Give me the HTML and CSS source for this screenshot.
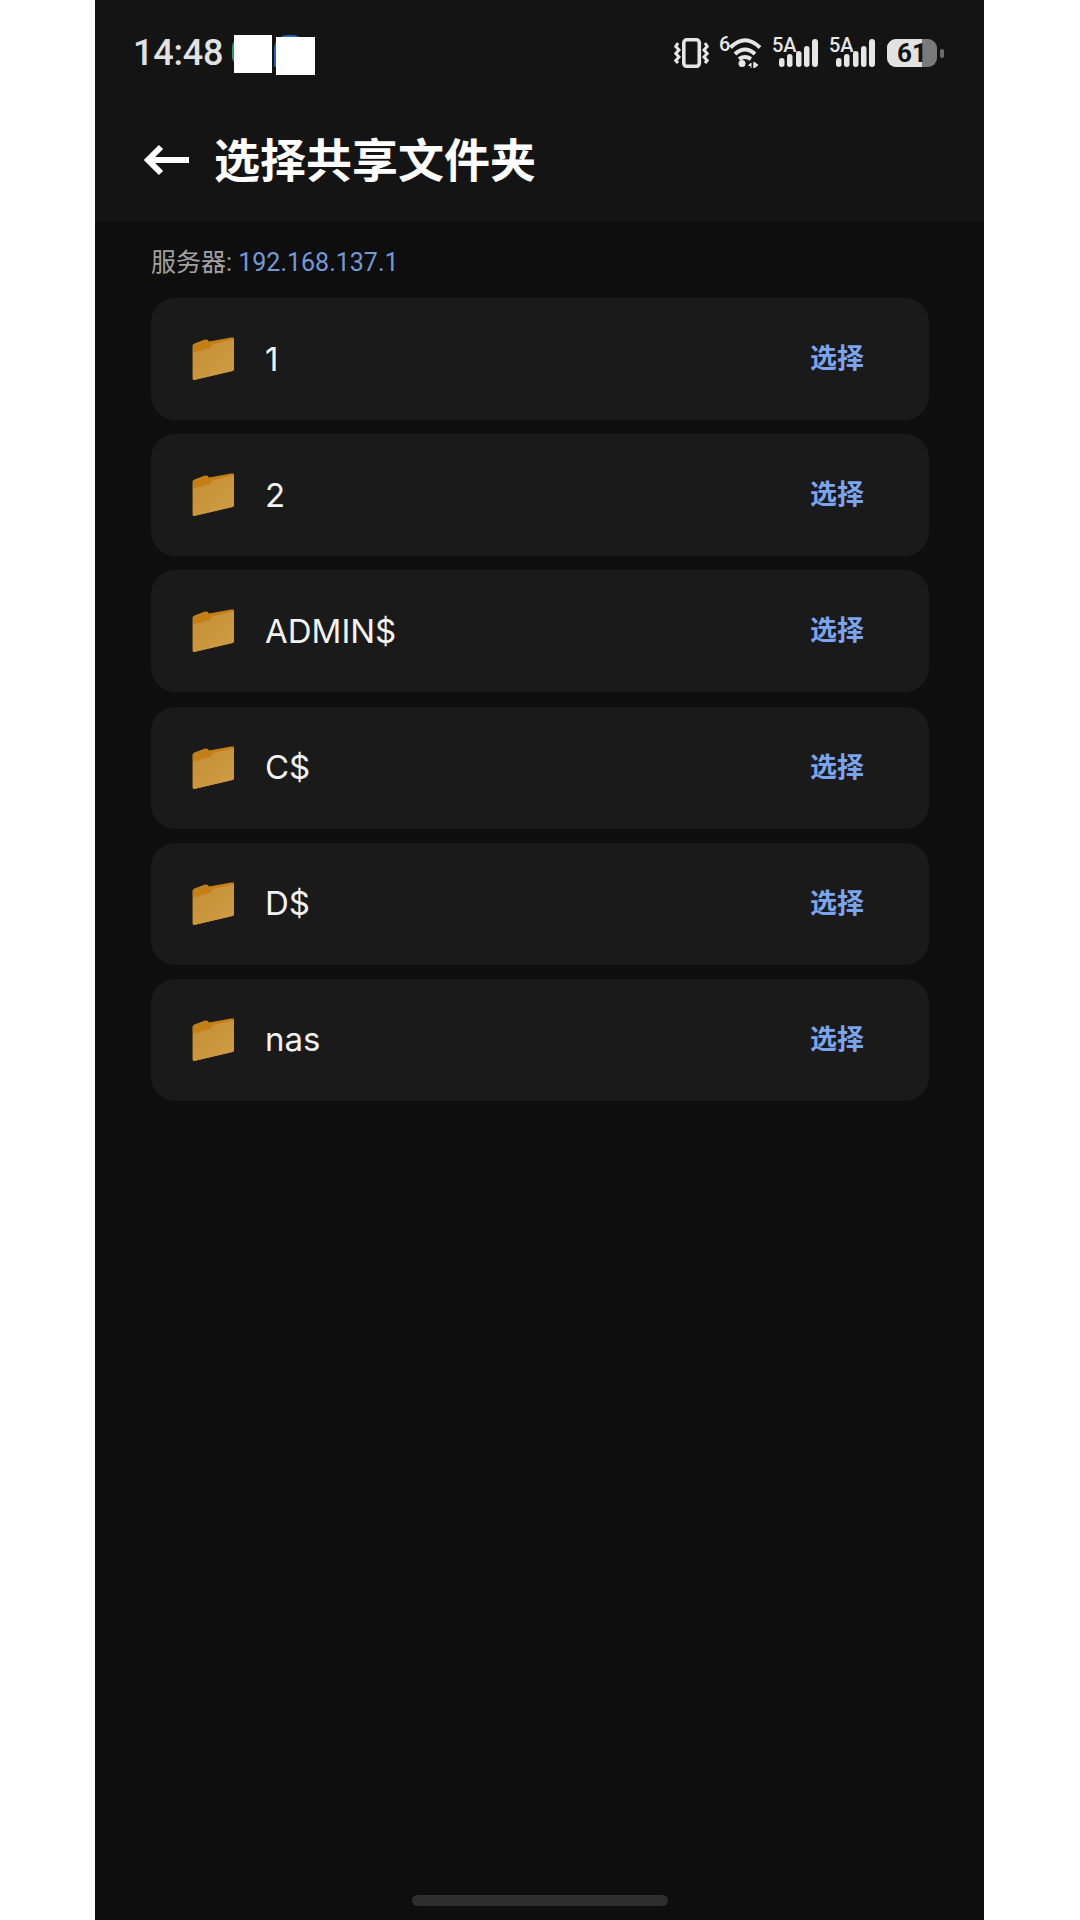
FILE: index.html
```html
<!DOCTYPE html>
<html lang="zh-CN">
<head>
    <meta charset="UTF-8">
    <meta name="viewport" content="width=device-width, initial-scale=1.0">
    <title>选择共享文件夹</title>
    <link rel="stylesheet" href="styles.css">
</head>
<body>
    <svg class="defs" width="0" height="0">
        <defs>
            <linearGradient id="folder-front" x1="0" y1="0" x2="1" y2="1">
                <stop offset="0" stop-color="#c48f35"/>
                <stop offset="1" stop-color="#cf9c46"/>
            </linearGradient>
        </defs>
        <symbol id="folder" viewBox="0 0 42 43">
            <path d="M0.500 9 Q0.500 7 2.500 6.500 L13 2.500 Q16 2 17 4.500 L40.500 0.300 Q42 0.300 42 2 L42 32 Q42 33.500 40.500 34 L2 43 Q0.500 43 0.500 41 Z" fill="#c57f17"/>
            <path d="M1 15.500 L18 11 Q20 7.500 22 7 L40.500 2.500 Q42 2.500 42 4 L42 32 Q42 33.500 40.500 34 L2 43 Q1 43 1 41 Z" fill="url(#folder-front)"/>
        </symbol>
    </svg>

    <div class="phone">
        <header class="top">
            <div class="status-bar">
                <div class="clock-group">
                    <span class="clock">14:48</span>
                    <span class="notif notif-green"></span>
                    <span class="notif notif-blue"></span>
                </div>
                <div class="status-icons">
                    <svg class="ic-vibrate" width="35" height="30" viewBox="0 0 35 30">
                        <rect x="9.800" y="1.800" width="15.500" height="26.500" rx="3" fill="none" stroke="#e6e6e6" stroke-width="3.600"/>
                        <path d="M4 5 L1.800 8.500 L5 12 L1.800 15.500 L5 19 L1.800 22.500 L4 25 M31 5 L33.200 8.500 L30 12 L33.200 15.500 L30 19 L33.200 22.500 L31 25" fill="none" stroke="#e6e6e6" stroke-width="3"/>
                    </svg>
                    <svg class="ic-wifi" width="42" height="38" viewBox="0 -8 42 38">
                        <text x="0" y="13" class="sig-text">6</text>
                        <path d="M11.500 9.500 Q26 -5 41 9.500 M16 16 Q26 7 36 16 M20 21 Q26 17 32 21" fill="none" stroke="#e6e6e6" stroke-width="4"/>
                        <circle cx="23" cy="25.500" r="3.500" fill="#e6e6e6"/>
                        <path d="M32 30 V25 L29.500 27.500 H32 M35 24 V30 M35 24 L39 27 L35 30 Z" fill="#e6e6e6" stroke="#e6e6e6"/>
                    </svg>
                    <svg class="ic-signal" width="47" height="38" viewBox="0 -8 47 38">
                        <text x="0" y="14" class="sig-text">5A</text>
                        <rect x="7" y="20" width="5.500" height="9" rx="2.700"/>
                        <rect x="15" y="16" width="5.500" height="13" rx="2.700"/>
                        <rect x="24" y="13" width="5.500" height="16" rx="2.700"/>
                        <rect x="32" y="8" width="5.500" height="21" rx="2.700"/>
                        <rect x="40" y="1" width="6" height="28" rx="3"/>
                    </svg>
                    <svg class="ic-signal" width="47" height="38" viewBox="0 -8 47 38">
                        <text x="0" y="14" class="sig-text">5A</text>
                        <rect x="7" y="20" width="5.500" height="9" rx="2.700"/>
                        <rect x="15" y="16" width="5.500" height="13" rx="2.700"/>
                        <rect x="24" y="13" width="5.500" height="16" rx="2.700"/>
                        <rect x="32" y="8" width="5.500" height="21" rx="2.700"/>
                        <rect x="40" y="1" width="6" height="28" rx="3"/>
                    </svg>
                    <div class="battery">
                        <div class="battery-body">
                            <div class="battery-level"></div>
                            <span class="battery-num">61</span>
                        </div>
                        <div class="battery-nub"></div>
                    </div>
                </div>
            </div>
            <div class="title-bar">
                <svg class="back" width="46" height="32" viewBox="0 0 46 32">
                    <path d="M45 16 H5 M17 3 L4 16 L17 29" fill="none" stroke="#fff" stroke-width="6"/>
                </svg>
                <h1>选择共享文件夹</h1>
            </div>
        </header>

        <main class="content">
            <p class="server">服务器: <span class="server-ip">192.168.137.1</span></p>
            <ul class="share-list">
                <li class="share-row">
                    <svg class="folder" width="42" height="43"><use href="#folder"/></svg>
                    <span class="share-name">1</span>
                    <button class="pick">选择</button>
                </li>
                <li class="share-row">
                    <svg class="folder" width="42" height="43"><use href="#folder"/></svg>
                    <span class="share-name">2</span>
                    <button class="pick">选择</button>
                </li>
                <li class="share-row">
                    <svg class="folder" width="42" height="43"><use href="#folder"/></svg>
                    <span class="share-name">ADMIN$</span>
                    <button class="pick">选择</button>
                </li>
                <li class="share-row">
                    <svg class="folder" width="42" height="43"><use href="#folder"/></svg>
                    <span class="share-name">C$</span>
                    <button class="pick">选择</button>
                </li>
                <li class="share-row">
                    <svg class="folder" width="42" height="43"><use href="#folder"/></svg>
                    <span class="share-name">D$</span>
                    <button class="pick">选择</button>
                </li>
                <li class="share-row">
                    <svg class="folder" width="42" height="43"><use href="#folder"/></svg>
                    <span class="share-name">nas</span>
                    <button class="pick">选择</button>
                </li>
            </ul>
        </main>

        <div class="home-bar"></div>
    </div>
</body>
</html>
```

FILE: styles.css
```css
* {
    box-sizing: border-box;
}

body, h1, p, ul, button {
    margin: 0;
    padding: 0;
}

body {
    width: 1080px;
    height: 1920px;
    overflow: hidden;
    background-color: #fff;
    font-family: "Inter", "Noto Sans CJK SC", sans-serif;
}

.defs {
    position: absolute;
}

.phone {
    width: 889px;
    height: 1920px;
    margin-left: 95px;
    display: flex;
    flex-direction: column;
    background-color: #0e0e0e;
}

.top {
    height: 221px;
    flex-shrink: 0;
    background-color: #141414;
    border-bottom: 1px solid #171717;
}

.status-bar {
    position: relative;
    z-index: 0;
    height: 104px;
    display: flex;
    justify-content: space-between;
    align-items: flex-start;
    padding: 35px 40px 0 38px;
}

.clock-group {
    display: flex;
    align-items: flex-start;
}

.clock {
    width: 101px;
    margin-top: -4px;
    font-family: "Roboto", sans-serif;
    font-size: 36px;
    font-weight: 500;
    line-height: 44px;
    letter-spacing: -0.2px;
    color: #e2e2e2;
}

.notif {
    position: relative;
    width: 38px;
    height: 38px;
    background-color: #fff;
}

.notif-green::before {
    content: "";
    position: absolute;
    z-index: -1;
    left: -2px;
    top: 4px;
    width: 12px;
    height: 26px;
    border-left: 2px solid #1fa35c;
    border-radius: 8px 0 0 8px;
}

.notif-blue {
    margin-left: 4px;
    margin-top: 2px;
    width: 39px;
}

.notif-blue::before {
    content: "";
    position: absolute;
    z-index: -1;
    left: -2px;
    top: -2px;
    width: 30px;
    height: 30px;
    border-left: 2px solid #2a62c4;
    border-top: 2px solid #2a62c4;
    border-radius: 14px 14px 0 0;
}

.status-icons {
    display: flex;
    align-items: flex-start;
    margin-top: 3px;
}

.ic-wifi {
    margin-left: 10px;
    margin-top: -8px;
}

.ic-signal {
    margin-left: 11px;
    margin-top: -8px;
    fill: #e6e6e6;
}

.ic-signal + .ic-signal {
    margin-left: 10px;
}

.sig-text {
    font-family: "Roboto", sans-serif;
    font-size: 20px;
    font-weight: 500;
    fill: #e6e6e6;
}

.battery {
    display: flex;
    align-items: center;
    margin-left: 11px;
    margin-top: 1px;
}

.battery-body {
    position: relative;
    width: 50px;
    height: 28px;
    border-radius: 9px;
    overflow: hidden;
    background-color: #7a7a7a;
    display: flex;
    align-items: center;
    justify-content: center;
}

.battery-level {
    position: absolute;
    left: 0;
    top: 0;
    bottom: 0;
    width: 35px;
    background-color: #e2e2e2;
}

.battery-num {
    position: relative;
    font-family: "Roboto", sans-serif;
    font-size: 26px;
    font-weight: 700;
    line-height: 28px;
    color: #111;
}

.battery-nub {
    width: 4px;
    height: 9px;
    margin-left: 3px;
    border-radius: 2px;
    background-color: #6d6d6d;
}

.title-bar {
    display: flex;
    align-items: center;
    height: 112px;
    padding-left: 49px;
}

.back {
    flex-shrink: 0;
}

h1 {
    margin-left: 24px;
    margin-bottom: 7px;
    font-family: "Noto Sans CJK SC", sans-serif;
    font-size: 46px;
    font-weight: 700;
    line-height: 60px;
    color: #fff;
}

.content {
    flex: 1;
    padding: 27px 55px 0 56px;
}

.server {
    height: 34px;
    font-family: "Roboto", "Noto Sans CJK SC", sans-serif;
    font-size: 25px;
    line-height: 30px;
    color: #a2a2a2;
}

.server-ip {
    color: #7399d8;
}

.share-list {
    list-style-type: none;
    margin-top: 16px;
    display: flex;
    flex-direction: column;
    gap: 14.2px;
}

.share-row {
    height: 122px;
    display: flex;
    align-items: center;
    padding: 0 65px 0 41px;
    border-radius: 24px;
    background-color: #1a1a1a;
}

.folder {
    flex-shrink: 0;
    margin-bottom: 1px;
}

.share-name {
    flex: 1;
    margin-left: 31px;
    margin-bottom: 1px;
    font-size: 33px;
    color: #f2f2f2;
}

.pick {
    margin-bottom: 5px;
    border: none;
    background: none;
    font-family: "Noto Sans CJK SC", sans-serif;
    font-size: 27px;
    font-weight: 700;
    color: #7aa5ee;
}

.home-bar {
    width: 256px;
    height: 11px;
    flex-shrink: 0;
    margin: 0 auto 14px;
    border-radius: 6px;
    background-color: #2e2e2e;
}
```
